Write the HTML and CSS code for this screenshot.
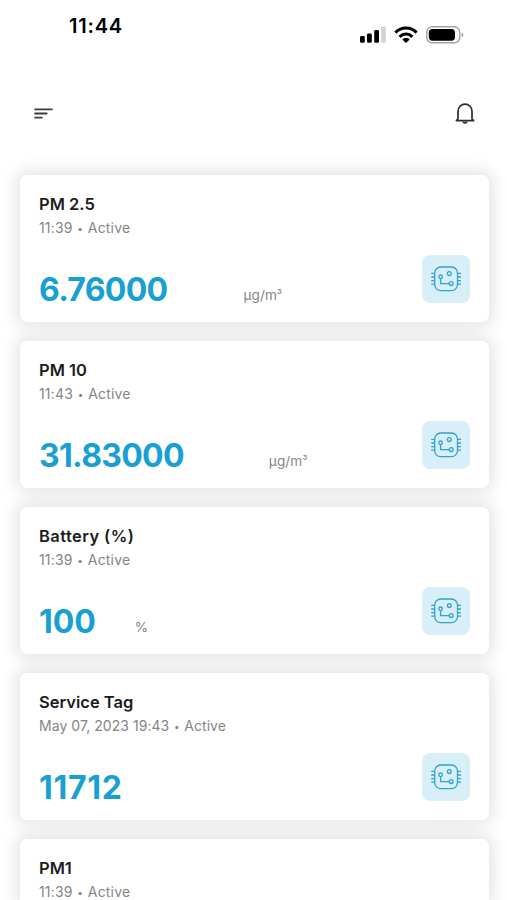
FILE: index.html
```
<!DOCTYPE html>
<html lang="en">
<head>
<meta charset="utf-8">
<title>Sensors</title>
<link rel="stylesheet" href="styles.css">
</head>
<body>
<svg width="0" height="0" class="defs">
  <symbol id="chip" viewBox="0 0 32 28">
    <g fill="none" stroke="currentColor" stroke-width="1.3">
      <rect x="4.7" y="2" width="22.8" height="23.6" rx="6"/>
      <path d="M1.2 8.4h3.5M1.2 12h3.5M1.2 15.6h3.5M1.2 19.2h3.5M27.5 8.4H31M27.5 12H31M27.5 15.6H31M27.5 19.2H31"/>
      <circle cx="10.6" cy="11.8" r="1.8"/>
      <circle cx="19.3" cy="8.6" r="1.9"/>
      <circle cx="21.2" cy="18.6" r="1.9"/>
      <path d="M10.6 13.6v5.1h8.7"/>
    </g>
  </symbol>
</svg>
<div class="status">
  <span class="time">11:44</span>
  <span class="indicators">
    <svg width="26" height="18" viewBox="0 0 26 18">
      <rect x="0" y="10" width="4.8" height="6.8" rx="1.4"/>
      <rect x="7" y="7.6" width="4.8" height="9.2" rx="1.4"/>
      <rect x="14.2" y="4" width="4.8" height="12.8" rx="1.4"/>
      <rect x="21.2" y="0.4" width="4.6" height="16.4" rx="1.4" fill="#d2d2d2"/>
    </svg>
    <svg class="wifi" width="24" height="18" viewBox="0 0 24 18">
      <g fill="none" stroke="#000" stroke-width="3">
        <path d="M1.4 6.6C7.4.6 16.6.6 22.6 6.6"/>
        <path d="M5.6 10.8c3.7-3.6 9.1-3.6 12.8 0"/>
      </g>
      <path d="M12 17l-3.7-3.6c2.1-1.9 5.3-1.9 7.4 0z"/>
    </svg>
    <svg class="battery" width="39" height="18" viewBox="0 0 39 18">
      <rect x=".8" y=".8" width="33" height="16" rx="5.4" fill="none" stroke="#a2a2a2" stroke-width="1.4"/>
      <rect x="2.8" y="2.9" width="26.2" height="11.8" rx="3.6"/>
      <path d="M35.6 6.4c2.4.7 2.4 4.1 0 4.8z" fill="#a2a2a2"/>
    </svg>
  </span>
</div>
<header class="toolbar">
  <svg width="20" height="14" viewBox="0 0 20 14" stroke="#3b3b40" stroke-width="1.8">
    <path d="M.4 2.4H18.6M.4 6.5H13.4M.4 10.6H8.6"/>
  </svg>
  <svg width="22" height="24" viewBox="0 0 22 24" fill="none" stroke="#2c2c30" stroke-width="1.7" stroke-linejoin="round">
    <path d="M4 16.9V9.2a7 7 0 0 1 14 0v7.7l1.6 1.7H2.4z"/>
    <path d="M9 19.8c.5 1.3 3.5 1.3 4 0"/>
  </svg>
</header>
<main class="cards">
  <article class="card">
    <h2>PM 2.5</h2>
    <p class="meta">11:39 <i>•</i> Active</p>
    <div class="reading"><span class="value">6.76000</span><span class="unit wide">µg/m<b>³</b></span></div>
    <span class="badge"><svg width="32" height="28"><use href="#chip"/></svg></span>
  </article>
  <article class="card">
    <h2>PM 10</h2>
    <p class="meta">11:43 <i>•</i> Active</p>
    <div class="reading"><span class="value">31.83000</span><span class="unit wider">µg/m<b>³</b></span></div>
    <span class="badge"><svg width="32" height="28"><use href="#chip"/></svg></span>
  </article>
  <article class="card">
    <h2 class="spaced">Battery (%)</h2>
    <p class="meta">11:39 <i>•</i> Active</p>
    <div class="reading"><span class="value whole">100</span><span class="unit">%</span></div>
    <span class="badge"><svg width="32" height="28"><use href="#chip"/></svg></span>
  </article>
  <article class="card">
    <h2>Service Tag</h2>
    <p class="meta long">May 07, 2023 19:43 <i>•</i> Active</p>
    <div class="reading"><span class="value spaced">11712</span></div>
    <span class="badge"><svg width="32" height="28"><use href="#chip"/></svg></span>
  </article>
  <article class="card last">
    <h2>PM1</h2>
    <p class="meta">11:39 <i>•</i> Active</p>
  </article>
</main>
</body>
</html>
```
FILE: styles.css
```
* { box-sizing: border-box; }
body {
  margin: 0;
  height: 900px;
  overflow: hidden;
  background: #fff;
  font-family: Inter, "Liberation Sans", sans-serif;
}
svg { display: block; }
.defs { position: absolute; }
.status {
  height: 90px;
  padding: 14px 42.5px 0 69px;
  display: flex;
  justify-content: space-between;
  align-items: flex-start;
}
.time { font-size: 20px; line-height: 25px; font-weight: 600; letter-spacing: .8px; }
.indicators { display: flex; margin-top: 12px; }
.wifi { margin-left: 8.5px; }
.battery { margin-left: 7.5px; }
.toolbar {
  height: 85px;
  padding: 12px 31px 0 34px;
  display: flex;
  justify-content: space-between;
  align-items: flex-start;
}
.toolbar svg:first-child { margin-top: 5px; }
.cards {
  display: flex;
  flex-direction: column;
  gap: 19px;
  height: 725px;
  padding: 0 18.5px 0 20px;
  isolation: isolate;
}
.card {
  position: relative;
  flex: none;
  height: 147px;
  padding: 18px 19px 19px;
  border-radius: 8px;
  background: #fff;
  display: grid;
  grid-template-columns: 1fr 48px;
  grid-template-rows: 23px 24px 1fr;
}
.card::before {
  content: "";
  position: absolute;
  inset: 0;
  z-index: -1;
  border-radius: 8px;
  box-shadow: 0 0 16px 5px rgba(0, 0, 0, .1);
}
.card.last {
  flex: 1;
  border-radius: 8px 8px 0 0;
  padding-bottom: 0;
  grid-template-rows: 23px 24px;
}
h2 {
  grid-column: 1 / 3;
  margin: 0;
  font-size: 16.5px;
  line-height: 22px;
  font-weight: 600;
  color: #1c1c1e;
}
h2.spaced { letter-spacing: .42px; }
.meta {
  grid-column: 1 / 3;
  margin: 0;
  font-size: 14px;
  line-height: 23px;
  letter-spacing: .17px;
  color: #858585;
}
.meta.long { letter-spacing: .05px; }
.meta i {
  display: inline-block;
  width: 7px;
  font-size: 10px;
  font-style: normal;
  line-height: 1;
  text-align: center;
  vertical-align: 1px;
}
.reading {
  align-self: end;
  display: flex;
  align-items: baseline;
  height: 40px;
  margin-bottom: -7px;
}
.value {
  font-size: 32px;
  line-height: 40px;
  font-weight: 650;
  letter-spacing: -.7px;
  color: #189fd3;
}
.value.whole { letter-spacing: -.1px; }
.value.spaced { letter-spacing: .7px; }
.unit {
  position: relative;
  top: -1px;
  margin-left: 39px;
  font-size: 13.6px;
  line-height: 16px;
  letter-spacing: .1px;
  color: #858585;
}
.unit b { font-size: 11px; font-weight: 400; vertical-align: 1.5px; line-height: 1; }
.unit.wide { margin-left: 76px; }
.unit.wider { margin-left: 85px; }
.badge {
  align-self: end;
  width: 48px;
  height: 48px;
  border-radius: 8px;
  background: #d9eff8;
  color: #2da5d0;
  display: grid;
  place-items: center;
}
```
